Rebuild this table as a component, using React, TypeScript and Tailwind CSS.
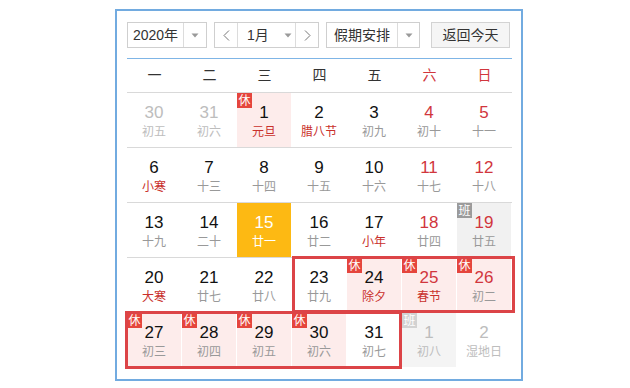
import React from "react";

type Cell = {
  d: number;
  l: string;
  other?: boolean;
  wk?: boolean;
  fest?: boolean;
  rest?: boolean;
  work?: boolean;
  today?: boolean;
};

const rows: Cell[][] = [
  [
    { d: 30, l: "初五", other: true },
    { d: 31, l: "初六", other: true },
    { d: 1, l: "元旦", fest: true, rest: true },
    { d: 2, l: "腊八节", fest: true },
    { d: 3, l: "初九" },
    { d: 4, l: "初十", wk: true },
    { d: 5, l: "十一", wk: true },
  ],
  [
    { d: 6, l: "小寒", fest: true },
    { d: 7, l: "十三" },
    { d: 8, l: "十四" },
    { d: 9, l: "十五" },
    { d: 10, l: "十六" },
    { d: 11, l: "十七", wk: true },
    { d: 12, l: "十八", wk: true },
  ],
  [
    { d: 13, l: "十九" },
    { d: 14, l: "二十" },
    { d: 15, l: "廿一", today: true },
    { d: 16, l: "廿二" },
    { d: 17, l: "小年", fest: true },
    { d: 18, l: "廿四", wk: true },
    { d: 19, l: "廿五", wk: true, work: true },
  ],
  [
    { d: 20, l: "大寒", fest: true },
    { d: 21, l: "廿七" },
    { d: 22, l: "廿八" },
    { d: 23, l: "廿九" },
    { d: 24, l: "除夕", fest: true, rest: true },
    { d: 25, l: "春节", fest: true, rest: true, wk: true },
    { d: 26, l: "初二", rest: true, wk: true },
  ],
  [
    { d: 27, l: "初三", rest: true },
    { d: 28, l: "初四", rest: true },
    { d: 29, l: "初五", rest: true },
    { d: 30, l: "初六", rest: true },
    { d: 31, l: "初七" },
    { d: 1, l: "初八", other: true, work: true },
    { d: 2, l: "湿地日", other: true },
  ],
];

const Tri = () => (
  <svg width="8" height="5" viewBox="0 0 8 5">
    <path d="M0.5 0.5 L7.5 0.5 L4 4.5 Z" fill="#9a9a9a" />
  </svg>
);

const Chev = ({ right }: { right?: boolean }) => (
  <svg width="7" height="11" viewBox="0 0 7 11">
    <polyline
      points={right ? "1,0.5 6,5.5 1,10.5" : "6,0.5 1,5.5 6,10.5"}
      fill="none"
      stroke="#777"
      strokeWidth="1"
    />
  </svg>
);

function DayCell({ c }: { c: Cell }) {
  let bg = "bg-white";
  if (c.today) bg = "bg-[#fdb913]";
  else if (c.rest) bg = "bg-[#fdeceb]";
  else if (c.work && !c.other) bg = "bg-[#f1f1f1]";
  else if (c.work && c.other) bg = "bg-[#f4f4f4]";

  let numColor = "text-[#111]";
  if (c.today) numColor = "text-white";
  else if (c.other) numColor = "text-[#bdbdbd]";
  else if (c.wk) numColor = "text-[#d1363d]";

  let lunColor = "text-[#999]";
  if (c.today) lunColor = "text-white";
  else if (c.other) lunColor = "text-[#bdbdbd]";
  else if (c.fest) lunColor = "text-[#c9302c]";

  return (
    <div className="h-[54px] w-[55px] pr-px">
      <div className={`relative flex h-full flex-col items-center pt-[10px] ${bg}`}>
        {c.rest && (
          <div className="absolute left-0 top-0 flex h-[15px] w-[15px] items-center justify-center bg-[#e5453d] text-[12px] leading-none text-white">
            休
          </div>
        )}
        {c.work && (
          <div
            className={`absolute left-0 top-0 flex h-[15px] w-[15px] items-center justify-center text-[12px] leading-none text-white ${
              c.other ? "bg-[#d2d2d2]" : "bg-[#9b9b9b]"
            }`}
          >
            班
          </div>
        )}
        <div className={`text-[17px] leading-[20px] ${numColor}`}>{c.d}</div>
        <div className={`mt-[2px] text-[12px] leading-[14px] ${lunColor}`}>{c.l}</div>
      </div>
    </div>
  );
}

export default function App() {
  const heads = ["一", "二", "三", "四", "五", "六", "日"];
  return (
    <div
      className="h-[388px] w-[630px] bg-white pl-[115px] pt-[9px]"
      style={{ fontFamily: '"Liberation Sans", "Noto Sans CJK SC", sans-serif' }}
    >
      <div className="relative h-[372px] w-[408px] border-2 border-[#72abe0] pl-[10px] pr-[9px] pt-[11px]">
        {/* toolbar */}
        <div className="flex h-[26px] items-stretch text-[14px] text-[#333]">
          <div className="flex w-[80px] border border-[#cfcfcf]">
            <div className="flex w-[55px] items-center justify-center">2020年</div>
            <div className="flex flex-1 items-center justify-center border-l border-[#dcdcdc]">
              <Tri />
            </div>
          </div>
          <div className="ml-[7px] flex w-[105px] border border-[#cfcfcf]">
            <div className="flex w-[22px] items-center justify-center">
              <Chev />
            </div>
            <div className="flex w-[59px] items-center border-x border-[#dcdcdc] pl-[9px]">
              <span>1月</span>
              <span className="ml-[15px] flex">
                <Tri />
              </span>
            </div>
            <div className="flex flex-1 items-center justify-center">
              <Chev right />
            </div>
          </div>
          <div className="ml-[7px] flex w-[94px] border border-[#cfcfcf]">
            <div className="flex w-[70px] items-center justify-center">假期安排</div>
            <div className="flex flex-1 items-center justify-center border-l border-[#dcdcdc]">
              <Tri />
            </div>
          </div>
          <div className="ml-[11px] flex w-[79px] items-center justify-center border border-[#d3d3d3] bg-[#f5f5f5]">
            返回今天
          </div>
        </div>

        {/* blue line */}
        <div className="mt-[10px] h-px w-[385px] bg-[#7fb5e6]" />

        {/* header */}
        <div className="grid h-[34px] w-[385px] grid-cols-7 border-b border-[#d9d9d9] text-[14px]">
          {heads.map((h, i) => (
            <div
              key={h}
              className={`flex items-center justify-center ${i >= 5 ? "text-[#d1363d]" : "text-[#333]"}`}
            >
              {h}
            </div>
          ))}
        </div>

        {/* days */}
        <div className="w-[385px]">
          {rows.map((r, ri) => (
            <div
              key={ri}
              className={`grid grid-cols-7 ${ri < 4 ? "border-b border-[#d9d9d9]" : ""}`}
            >
              {r.map((c, ci) => (
                <DayCell key={ci} c={c} />
              ))}
            </div>
          ))}
        </div>

        {/* holiday frames */}
        <div className="pointer-events-none absolute left-[175px] top-[245px] h-[57px] w-[223px] border-[3px] border-[#dc4447]" />
        <div className="pointer-events-none absolute left-[8px] top-[300px] h-[58px] w-[277px] border-[3px] border-[#dc4447]" />
      </div>
    </div>
  );
}
